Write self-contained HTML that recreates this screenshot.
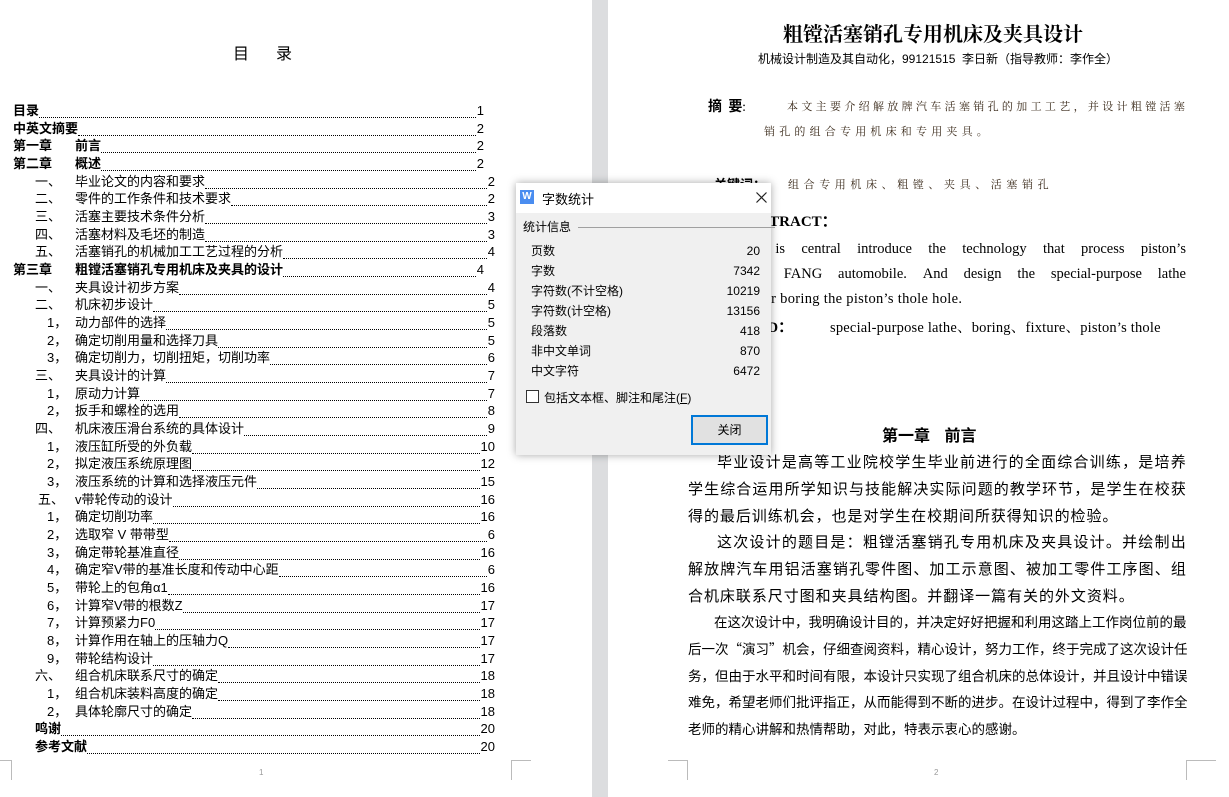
<!DOCTYPE html>
<html><head><meta charset="utf-8">
<style>
*{margin:0;padding:0;box-sizing:border-box}
body{width:1229px;height:797px;position:relative;overflow:hidden;background:#fff;font-family:"Liberation Sans","Noto Sans CJK SC",sans-serif;color:#000}
.abs{position:absolute;white-space:nowrap}
.gut{position:absolute;left:592px;top:0;width:16px;height:797px;background:#dcdddf}
.row{position:absolute;display:flex;align-items:flex-end;height:18px;font-size:13px;line-height:16px;font-family:"Liberation Sans","SimSun","Noto Sans CJK SC",sans-serif}
.row .n{display:inline-block}
.row .lead{flex:1;border-bottom:1px dotted #000;margin-bottom:1px;height:1px}
.row .num{padding-left:1px}
.cm{position:absolute;width:20px;height:20px}
.j{position:absolute;white-space:nowrap;display:flex;justify-content:space-between}
.dlg{position:absolute;left:516px;top:183px;width:255px;height:272px;background:#f0f0f0;box-shadow:0 0 8px rgba(0,0,0,.35);font-size:12px;font-family:"Liberation Sans","Noto Sans CJK SC",sans-serif;color:#000}
</style></head><body>
<div class="gut"></div>

<div class="abs" style="left:233px;top:40px;font-size:16px;font-family:'Noto Sans CJK SC',sans-serif">目</div>
<div class="abs" style="left:276px;top:40px;font-size:16px;font-family:'Noto Sans CJK SC',sans-serif">录</div>

<div id="toc"></div>

<div class="cm" style="left:511px;top:760px;border-left:1px solid #bbb;border-top:1px solid #bbb;width:20px;height:20px"></div>
<div class="cm" style="left:0;top:760px;width:12px;border-right:1px solid #bbb;border-top:1px solid #bbb;height:20px"></div>
<div class="abs" style="left:259px;top:768px;font-size:8px;color:#999">1</div>

<div class="cm" style="left:668px;top:760px;border-right:1px solid #bbb;border-top:1px solid #bbb;width:20px"></div>
<div class="cm" style="left:1186px;top:760px;border-left:1px solid #bbb;border-top:1px solid #bbb;width:30px"></div>
<div class="abs" style="left:934px;top:768px;font-size:8px;color:#999">2</div>

<div class="abs" style="left:783px;top:18px;font-size:20px;font-weight:bold;font-family:'Liberation Serif','Noto Serif CJK SC',serif">粗镗活塞销孔专用机床及夹具设计</div>
<div class="abs" style="left:758px;top:50px;font-size:12px;font-family:'Liberation Sans','Noto Sans CJK SC',sans-serif">机械设计制造及其自动化，99121515&nbsp;&nbsp;李日新（指导教师：李作全）</div>

<div class="abs" style="left:708px;top:96px;font-size:14px;font-weight:bold;font-family:'Noto Sans CJK SC',sans-serif">摘&nbsp;&nbsp;要<span style="font-weight:normal;font-size:12px">:</span></div>
<div class="j" style="left:787px;top:98px;width:398px;font-size:11px;color:#3a2a1a;font-family:'Noto Serif CJK SC',serif"><span>本</span><span>文</span><span>主</span><span>要</span><span>介</span><span>绍</span><span>解</span><span>放</span><span>牌</span><span>汽</span><span>车</span><span>活</span><span>塞</span><span>销</span><span>孔</span><span>的</span><span>加</span><span>工</span><span>工</span><span>艺</span><span>，</span><span>并</span><span>设</span><span>计</span><span>粗</span><span>镗</span><span>活</span><span>塞</span></div>
<div class="abs" style="left:764px;top:123px;font-size:11px;letter-spacing:4.2px;color:#3a2a1a;font-family:'Noto Serif CJK SC',serif">销孔的组合专用机床和专用夹具。</div>

<div class="abs" style="left:714px;top:174px;font-size:13px;font-weight:bold;font-family:'Noto Sans CJK SC',sans-serif">关键词：</div>
<div class="abs" style="left:788px;top:176px;font-size:11px;letter-spacing:4.6px;color:#3a2a1a;font-family:'Noto Serif CJK SC',serif">组合专用机床、粗镗、夹具、活塞销孔</div>

<div class="abs" style="left:740px;top:210px;font-size:15px;font-weight:bold;font-family:'Liberation Serif',serif">ABSTRACT：</div>
<div class="j" style="left:688px;top:241px;width:498px;font-size:14.5px;font-family:'Liberation Serif',serif"><span>The</span><span>paper</span><span>is</span><span>central</span><span>introduce</span><span>the</span><span>technology</span><span>that</span><span>process</span><span>piston’s</span></div>
<div class="j" style="left:688px;top:266px;width:498px;font-size:14.5px;font-family:'Liberation Serif',serif"><span>thole&nbsp;of</span><span>JIE</span><span>FANG</span><span>automobile.</span><span>And</span><span>design</span><span>the</span><span>special-purpose</span><span>lathe</span></div>
<div class="abs" style="left:688px;top:291px;font-size:14.5px;letter-spacing:0.3px;font-family:'Liberation Serif',serif">and fixture for boring the piston’s thole hole.</div>
<div class="abs" style="left:700px;top:316px;font-size:14.5px;font-weight:bold;font-family:'Liberation Serif',serif">KEYWORD：</div>
<div class="abs" style="left:830px;top:316px;font-size:14.5px;letter-spacing:0.2px;font-family:'Liberation Serif','Noto Serif CJK SC',serif">special-purpose lathe、boring、fixture、piston’s thole</div>

<div class="abs" style="left:882px;top:422px;font-size:16px;font-weight:bold;font-family:'Noto Sans CJK SC',sans-serif">第一章&nbsp;&nbsp;&nbsp;&nbsp;前言</div>

<div id="body"></div>

<div class="dlg">
  <div style="position:absolute;left:0;top:0;width:255px;height:30px;background:#fff"></div>
  <div style="position:absolute;left:4px;top:7px;width:14px;height:14px;background:#4a8df0;color:#fff;font-size:10px;line-height:14px;text-align:center;font-weight:bold">W</div>
  <div class="abs" style="left:26px;top:6px;font-size:13px">字数统计</div>
  <svg style="position:absolute;left:240px;top:9px" width="11" height="11"><path d="M0.5 0.5L10.5 10.5M10.5 0.5L0.5 10.5" stroke="#222" stroke-width="1.2"/></svg>
  <div class="abs" style="left:7px;top:35px">统计信息</div>
  <div style="position:absolute;left:62px;top:44px;width:197px;border-top:1px solid #a0a0a0"></div>
  <div class="abs" style="left:15px;top:58px;line-height:20px">页数<br>字数<br>字符数(不计空格)<br>字符数(计空格)<br>段落数<br>非中文单词<br>中文字符</div>
  <div class="abs" style="right:11px;top:58px;line-height:20px;text-align:right">20<br>7342<br>10219<br>13156<br>418<br>870<br>6472</div>
  <div style="position:absolute;left:10px;top:207px;width:13px;height:13px;border:1px solid #333;background:#fff"></div>
  <div class="abs" style="left:28px;top:206px">包括文本框、脚注和尾注(<u>F</u>)</div>
  <div style="position:absolute;left:175px;top:232px;width:77px;height:30px;border:2px solid #0078d7;background:#e1e1e1;text-align:center;line-height:26px;font-size:12px">关闭</div>
</div>

<script>
var rows=[
[13,"目录","",1,1],[13,"中英文摘要","",2,1],[13,"第一章","前言",2,1],[13,"第二章","概述",2,1],
[35,"一、","毕业论文的内容和要求",2],[35,"二、","零件的工作条件和技术要求",2],[35,"三、","活塞主要技术条件分析",3],[35,"四、","活塞材料及毛坯的制造",3],[35,"五、","活塞销孔的机械加工工艺过程的分析",4],
[13,"第三章","粗镗活塞销孔专用机床及夹具的设计",4,1],
[35,"一、","夹具设计初步方案",4],[35,"二、","机床初步设计",5],[47,"1，","动力部件的选择",5],[47,"2，","确定切削用量和选择刀具",5],[47,"3，","确定切削力，切削扭矩，切削功率",6],
[35,"三、","夹具设计的计算",7],[47,"1，","原动力计算",7],[47,"2，","扳手和螺栓的选用",8],
[35,"四、","机床液压滑台系统的具体设计",9],[47,"1，","液压缸所受的外负载",10],[47,"2，","拟定液压系统原理图",12],[47,"3，","液压系统的计算和选择液压元件",15],
[38,"五、","v带轮传动的设计",16],[47,"1，","确定切削功率",16],[47,"2，","选取窄 V 带带型",6],[47,"3，","确定带轮基准直径",16],[47,"4，","确定窄V带的基准长度和传动中心距",6],[47,"5，","带轮上的包角α1",16],[47,"6，","计算窄V带的根数Z",17],[47,"7，","计算预紧力F0",17],[47,"8，","计算作用在轴上的压轴力Q",17],[47,"9，","带轮结构设计",17],
[35,"六、","组合机床联系尺寸的确定",18],[47,"1，","组合机床装料高度的确定",18],[47,"2，","具体轮廓尺寸的确定",18],
[35,"鸣谢","",20,1],[35,"参考文献","",20,1]];
var h="";
rows.forEach(function(r,i){
 var top=101+i*17.67;
 var right=(i>=4&&i<9)||i>=10?495:484;
 var lbl=r[2]?'<span class="n" style="width:'+(75-r[0])+'px">'+r[1]+'</span><span>'+r[2]+'</span>':'<span>'+r[1]+'</span>';
 h+='<div class="row" style="left:'+r[0]+'px;top:'+top+'px;width:'+(right-r[0])+'px;'+(r[4]?'font-weight:bold':'')+'">'+lbl+'<span class="lead"></span><span class="num" style="font-weight:normal">'+r[3]+'</span></div>';
});
document.getElementById("toc").innerHTML=h;
var lines=[
[717,"毕业设计是高等工业院校学生毕业前进行的全面综合训练，是培养"],
[688,"学生综合运用所学知识与技能解决实际问题的教学环节，是学生在校获"],
[688,"得的最后训练机会，也是对学生在校期间所获得知识的检验。",1],
[717,"这次设计的题目是：粗镗活塞销孔专用机床及夹具设计。并绘制出"],
[688,"解放牌汽车用铝活塞销孔零件图、加工示意图、被加工零件工序图、组"],
[688,"合机床联系尺寸图和夹具结构图。并翻译一篇有关的外文资料。",1],
[714,"在这次设计中，我明确设计目的，并决定好好把握和利用这踏上工作岗位前的最"],
[688,"后一次“演习”机会，仔细查阅资料，精心设计，努力工作，终于完成了这次设计任"],
[688,"务，但由于水平和时间有限，本设计只实现了组合机床的总体设计，并且设计中错误"],
[688,"难免，希望老师们批评指正，从而能得到不断的进步。在设计过程中，得到了李作全"],
[688,"老师的精心讲解和热情帮助，对此，特表示衷心的感谢。",1]];
var b="";
var ys=[451,478,505,531,558,585,611,638,665,691,718];
lines.forEach(function(l,i){
 var w=1186-l[0];
 if(l[2]){ var ch=l[1].length; var per=(i<6?498/31:498/37); w=per*ch-(i<6?4:2);}
 var s=l[1].split("").map(function(c){return "<span>"+c+"</span>"}).join("");
 b+='<div class="j" style="left:'+l[0]+'px;top:'+ys[i]+'px;width:'+w+'px;font-size:'+(i<6?15:13.5)+'px;font-family:\'Noto Sans CJK SC\',sans-serif">'+s+'</div>';
});
document.getElementById("body").innerHTML=b;
</script>
</body></html>
